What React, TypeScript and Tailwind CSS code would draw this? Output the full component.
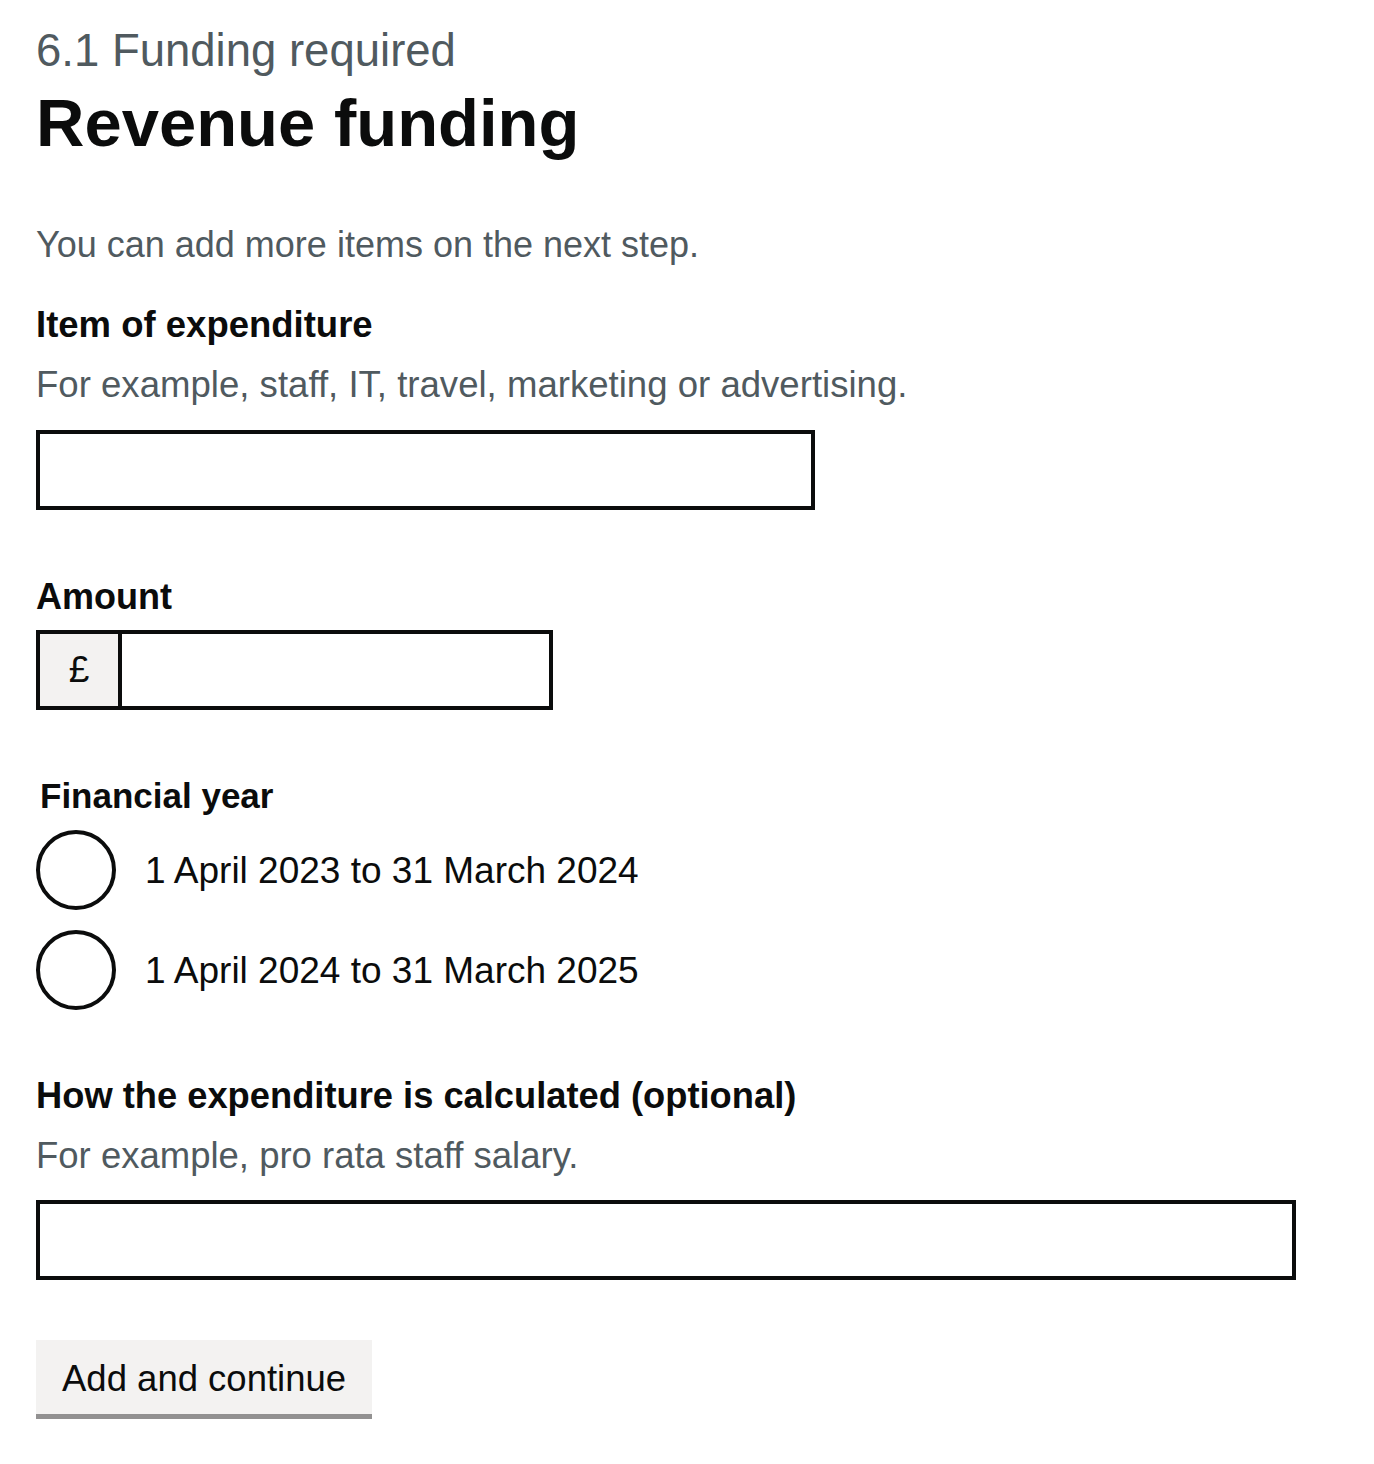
const font = { fontFamily: '"Liberation Sans", Arial, sans-serif' };

function TextInput({ width }: { width: string }) {
    return <input type="text" className={`block h-[80px] ${width} border-4 border-[#0b0c0c] bg-white outline-none`} />;
}

function Radio({ label }: { label: string }) {
    return (
        <label className="flex items-center h-[80px]">
            <span className="w-[80px] h-[80px] rounded-full border-4 border-[#0b0c0c] bg-white shrink-0" />
            <span className="ml-[29px] pt-[2px] text-[37px] leading-[50px] text-[#0b0c0c]">{label}</span>
        </label>
    );
}

export default function App(): React.ReactElement {
    return (
        <div style={font} className="bg-white min-h-[1464px] px-[36px] pt-[23px] text-[#0b0c0c]">
            <span className="block text-[45.5px] leading-[56px] text-[#505a5f]">6.1 Funding required</span>
            <h1 className="mt-[4px] text-[67px] leading-[80px] font-bold">Revenue funding</h1>

            <p className="mt-[57px] text-[36px] leading-[50px] text-[#505a5f]">You can add more items on the next step.</p>

            <label className="block mt-[30px] text-[36.5px] leading-[50px] font-bold">Item of expenditure</label>
            <div className="mt-[10px] text-[36.6px] leading-[50px] text-[#505a5f]">For example, staff, IT, travel, marketing or advertising.</div>
            <div className="mt-[20px]">
                <TextInput width="w-[779px]" />
            </div>

            <label className="block mt-[62px] text-[36px] leading-[50px] font-bold">Amount</label>
            <div className="mt-[8px] flex w-[517px] h-[80px]">
                <div className="w-[82px] h-[80px] flex items-center justify-center border-4 border-r-0 border-[#0b0c0c] bg-[#f3f2f1] text-[37px]">£</div>
                <input type="text" className="flex-1 h-[80px] border-4 border-[#0b0c0c] bg-white outline-none" />
            </div>

            <fieldset className="mt-[61px]">
                <legend className="pl-[4px] text-[35px] leading-[50px] font-bold">Financial year</legend>
                <div className="mt-[9px] flex flex-col gap-[20px]">
                    <Radio label="1 April 2023 to 31 March 2024" />
                    <Radio label="1 April 2024 to 31 March 2025" />
                </div>
            </fieldset>

            <label className="block mt-[61px] text-[36.3px] leading-[50px] font-bold">How the expenditure is calculated (optional)</label>
            <div className="mt-[10px] text-[36.5px] leading-[50px] text-[#505a5f]">For example, pro rata staff salary.</div>
            <div className="mt-[19px]">
                <TextInput width="w-[1260px]" />
            </div>

            <button className="mt-[60px] h-[74px] px-[26px] pt-[5px] bg-[#f3f2f1] text-[36.5px] text-[#0b0c0c] shadow-[0_5px_0_#929191]">
                Add and continue
            </button>
        </div>
    );
}
